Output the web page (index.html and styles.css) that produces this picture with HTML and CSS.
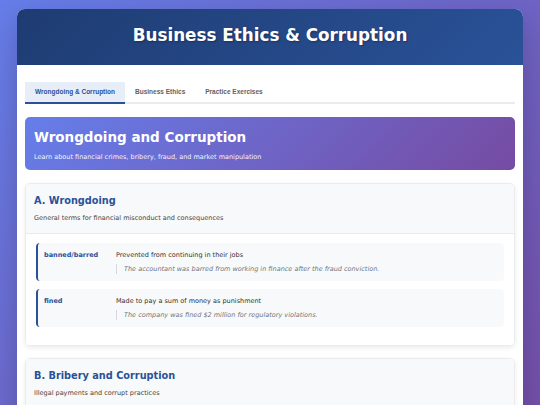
FILE: index.html
```html
<!DOCTYPE html>
<html lang="en">
<head>
  <meta charset="UTF-8">
  <meta name="viewport" content="width=device-width, initial-scale=1.0">
  <title>Business Ethics &amp; Corruption</title>
  <link rel="stylesheet" href="styles.css">
</head>
<body>
  <div class="container">
    <header class="header">
      <h1>Business Ethics &amp; Corruption</h1>
    </header>

    <div class="content">
      <div class="tab-container">
        <div class="tab active">Wrongdoing &amp; Corruption</div>
        <div class="tab">Business Ethics</div>
        <div class="tab">Practice Exercises</div>
      </div>

      <div class="hero">
        <h2>Wrongdoing and Corruption</h2>
        <p>Learn about financial crimes, bribery, fraud, and market manipulation</p>
      </div>

      <!-- A. Wrongdoing -->
      <div class="card">
        <div class="card-header">
          <h3>A. Wrongdoing</h3>
          <p class="description">General terms for financial misconduct and consequences</p>
        </div>
        <div class="card-body">
          <div class="term-item">
            <div class="term">banned/barred</div>
            <div class="meaning">
              <div class="definition">Prevented from continuing in their jobs</div>
              <div class="example">The accountant was barred from working in finance after the fraud conviction.</div>
            </div>
          </div>
          <div class="term-item">
            <div class="term">fined</div>
            <div class="meaning">
              <div class="definition">Made to pay a sum of money as punishment</div>
              <div class="example">The company was fined $2 million for regulatory violations.</div>
            </div>
          </div>
        </div>
      </div>

      <!-- B. Bribery and Corruption -->
      <div class="card">
        <div class="card-header">
          <h3>B. Bribery and Corruption</h3>
          <p class="description">Illegal payments and corrupt practices</p>
        </div>
        <div class="card-body"></div>
      </div>
    </div>
  </div>
</body>
</html>
```

FILE: styles.css
```css
body {
  font-family: 'DejaVu Sans', Verdana, sans-serif;
  margin: 0;
  padding: 9px 17px;
  min-height: 100vh;
  box-sizing: border-box;
  background: linear-gradient(135deg, #667eea 0%, #764ba2 100%);
  color: #333;
}

.container {
  background-color: white;
  border-radius: 8px;
  box-shadow: 0 10px 30px rgba(0, 0, 0, 0.2);
  overflow: hidden;
}

.header {
  background: linear-gradient(135deg, #1e3c72 0%, #2a5298 100%);
  padding: 16px 10px 20px;
  text-align: center;
}

.header h1 {
  margin: 0;
  font-size: 16.8px;
  line-height: 20px;
  color: white;
  text-shadow: 1px 1px 2px rgba(0, 0, 0, 0.3);
}

.content {
  padding: 17px 8px 20px;
}

.tab-container {
  display: flex;
  border-bottom: 2px solid #e9ecef;
  margin-bottom: 13px;
}

.tab {
  font-family: 'Liberation Sans', Arial, sans-serif;
  font-size: 6.5px;
  font-weight: bold;
  line-height: 8px;
  padding: 6px 10px;
  color: #5f5f5f;
  border-bottom: 2px solid transparent;
  margin-bottom: -2px;
}

.tab.active {
  background-color: #e8eef7;
  color: #2a5298;
  border-bottom-color: #2a5298;
}

.hero {
  background: linear-gradient(135deg, #667eea 0%, #764ba2 100%);
  border-radius: 5px;
  padding: 12px 9px 9px;
  color: white;
  margin-bottom: 13px;
}

.hero h2 {
  margin: 0 0 8px;
  font-size: 13.5px;
  line-height: 16px;
}

.hero p {
  margin: 0;
  font-size: 6.5px;
  line-height: 8px;
  opacity: 0.92;
}

.card {
  border: 1px solid #e9ecef;
  border-radius: 5px;
  box-shadow: 0 2px 5px rgba(0, 0, 0, 0.08);
  overflow: hidden;
  margin-bottom: 12px;
}

.card-header {
  background-color: #f8f9fa;
  border-bottom: 1px solid #e9ecef;
  padding: 11px 8px 10.4px;
}

.card-header h3 {
  margin: 0 0 7.6px;
  font-size: 9.75px;
  line-height: 11.7px;
  color: #2a5298;
}

.description {
  margin: 0;
  font-size: 6.5px;
  line-height: 8px;
  color: #444;
}

.card-body {
  background-color: white;
  padding: 9px 10px 10px;
  min-height: 40px;
}

.term-item {
  display: grid;
  grid-template-columns: 64px 1fr;
  gap: 8px;
  background-color: #f8f9fb;
  border-left: 2px solid #2a5298;
  border-radius: 4px;
  padding: 8px 8px 7px 6px;
  margin-bottom: 8px;
  font-size: 6.5px;
  line-height: 8px;
}

.term {
  font-weight: bold;
  color: #2a5298;
}

.definition {
  color: #333;
}

.example {
  margin-top: 5px;
  padding: 1px 0 1px 7px;
  border-left: 1px solid #d6d9dd;
  font-style: italic;
  color: #6c757d;
}
```
